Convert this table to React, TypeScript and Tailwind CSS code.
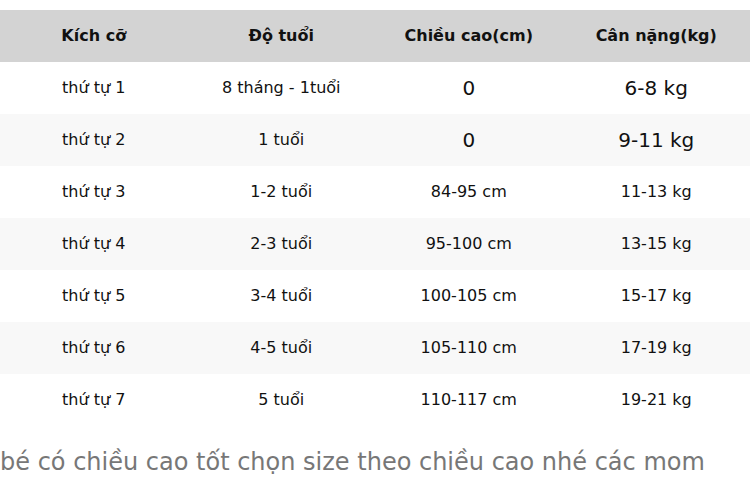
const rows = [
  { size: "thứ tự 1", age: "8 tháng - 1tuổi", height: "0", weight: "6-8 kg", big: true },
  { size: "thứ tự 2", age: "1 tuổi", height: "0", weight: "9-11 kg", big: true },
  { size: "thứ tự 3", age: "1-2 tuổi", height: "84-95 cm", weight: "11-13 kg" },
  { size: "thứ tự 4", age: "2-3 tuổi", height: "95-100 cm", weight: "13-15 kg" },
  { size: "thứ tự 5", age: "3-4 tuổi", height: "100-105 cm", weight: "15-17 kg" },
  { size: "thứ tự 6", age: "4-5 tuổi", height: "105-110 cm", weight: "17-19 kg" },
  { size: "thứ tự 7", age: "5 tuổi", height: "110-117 cm", weight: "19-21 kg" },
]

export default function App() {
  return (
    <div className="w-[750px] h-[498px] overflow-hidden bg-white pt-[10px] font-['DejaVu_Sans',sans-serif] text-[#111]">
      <div className="grid grid-cols-4 h-[52px] bg-[#d3d3d3] text-base font-bold">
        <div className="flex items-center justify-center">Kích cỡ</div>
        <div className="flex items-center justify-center">Độ tuổi</div>
        <div className="flex items-center justify-center">Chiều cao(cm)</div>
        <div className="flex items-center justify-center">Cân nặng(kg)</div>
      </div>
      {rows.map((r, i) => (
        <div key={i} className={`grid grid-cols-4 h-[52px] text-base ${i % 2 === 1 ? "bg-[#f8f8f8]" : "bg-white"}`}>
          <div className="flex items-center justify-center">{r.size}</div>
          <div className="flex items-center justify-center">{r.age}</div>
          <div className={`flex items-center justify-center ${r.big ? "text-xl" : ""}`}>{r.height}</div>
          <div className={`flex items-center justify-center ${r.big ? "text-xl" : ""}`}>{r.weight}</div>
        </div>
      ))}
      <p className="mt-[22px] whitespace-nowrap text-2xl leading-[28px] text-[#777]">
        bé có chiều cao tốt chọn size theo chiều cao nhé các mom
      </p>
    </div>
  )
}
